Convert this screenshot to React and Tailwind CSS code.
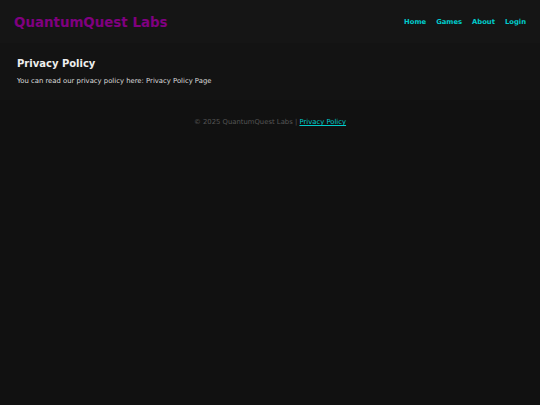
export default function App() {
  return (
    <div className="min-h-[405px] bg-[#111111] text-white" style={{ fontFamily: '"DejaVu Sans", Verdana, sans-serif' }}>
      <header className="h-[43px] flex items-center justify-between pl-[14px] pr-[14px] bg-[#151515] shadow-[0_1px_4px_rgba(0,0,0,0.5)]">
        <div className="text-[13.4px] font-bold text-[#800080] leading-none mt-[2px]">QuantumQuest Labs</div>
        <nav className="flex gap-[10px] text-[6.8px] font-bold text-[#00cccc] leading-none mt-[1px]">
          <a>Home</a>
          <a>Games</a>
          <a>About</a>
          <a>Login</a>
        </nav>
      </header>
      <main className="bg-[#131313] pl-[17px] pt-[15px] h-[57px]">
        <h2 className="text-[10px] font-bold leading-[12px] text-[#eeeeee]">Privacy Policy</h2>
        <p className="mt-[7px] text-[6.85px] leading-[8px] text-[#dddddd]">You can read our privacy policy here: Privacy Policy Page</p>
      </main>
      <footer className="pt-[18px] text-center text-[6.85px] leading-[8px] text-[#555555]">
        © 2025 QuantumQuest Labs | <a className="text-[#00cccc] underline">Privacy Policy</a>
      </footer>
    </div>
  );
}
